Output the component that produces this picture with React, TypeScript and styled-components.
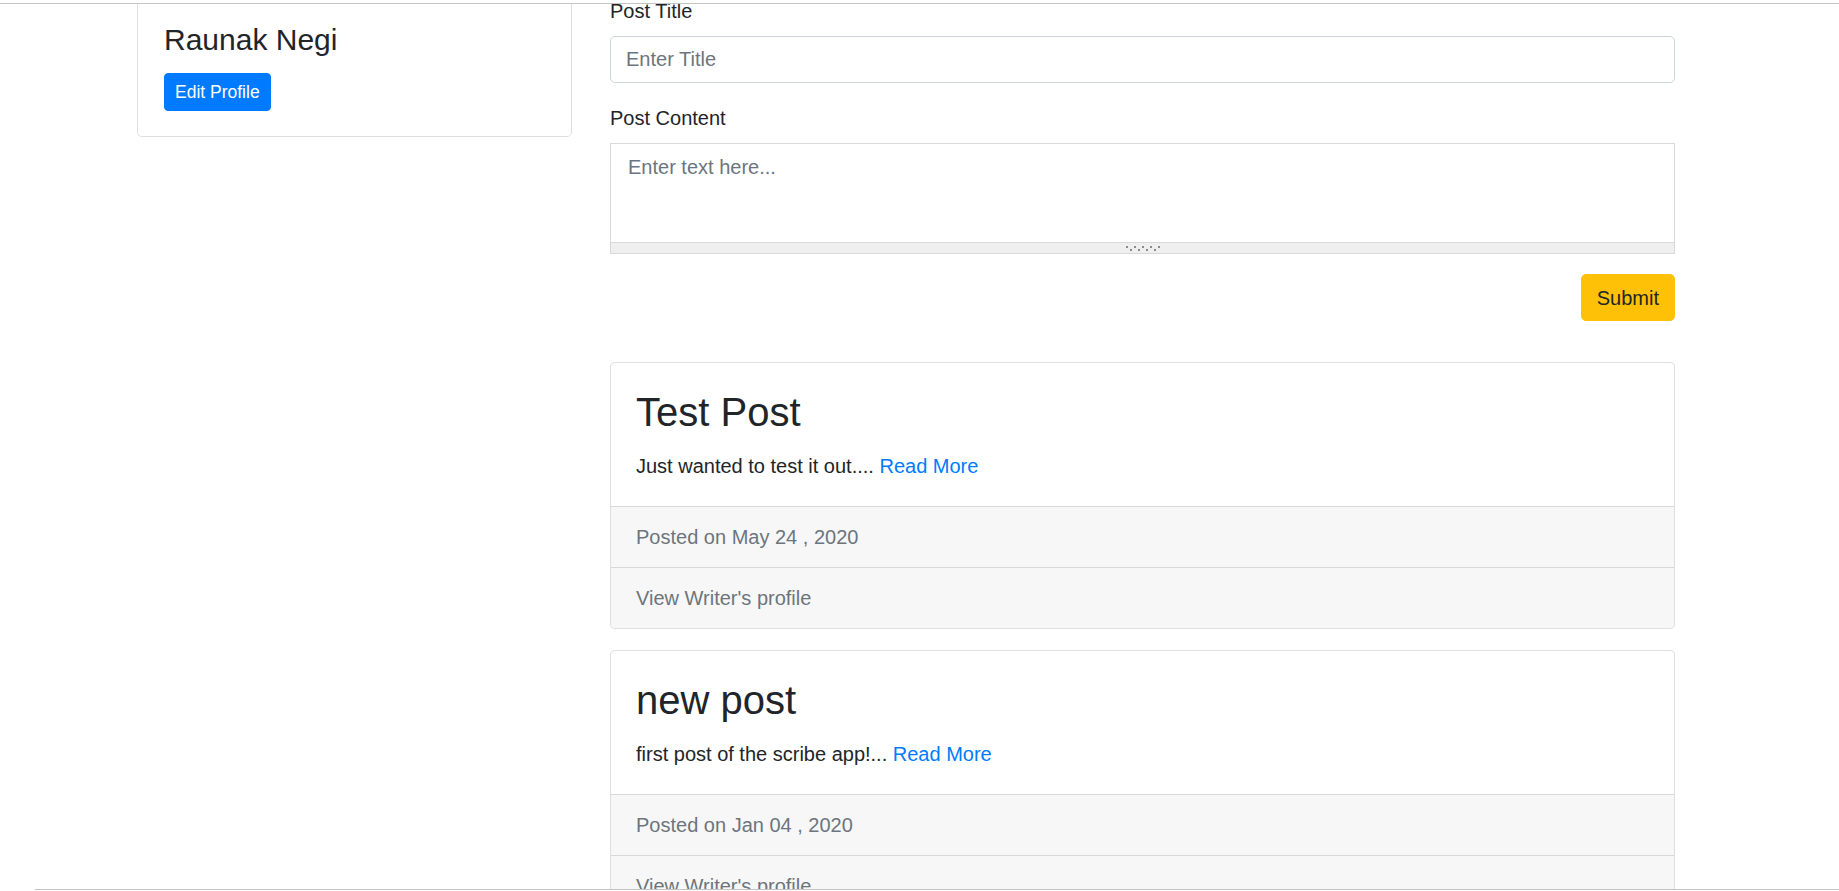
import React from "react";
import styled, { createGlobalStyle } from "styled-components";

const GlobalStyle = createGlobalStyle`
  html, body {
    margin: 0;
    padding: 0;
    background: #ffffff;
    overflow: hidden;
  }
  body {
    font-family: "Liberation Sans", Arial, sans-serif;
    color: #212529;
  }
  *, *::before, *::after {
    box-sizing: border-box;
  }
`;

const Frame = styled.div`
  width: 1839px;
  height: 891px;
  display: flex;
  flex-direction: column;
  background: #ffffff;
`;

const TopEdge = styled.div`
  flex: none;
  height: 4px;
  border-bottom: 1px solid #c4c4c4;
`;

const Viewport = styled.div`
  flex: 1;
  min-height: 0;
  overflow: hidden;
`;

const BottomEdge = styled.div`
  flex: none;
  height: 2px;
  margin-left: 35px;
  border-top: 1px solid #c4c4c4;
`;

const Row = styled.div`
  display: flex;
  align-items: flex-start;
  gap: 38px;
  padding-left: 137px;
  margin-top: -8px;
`;

const ProfileCard = styled.section`
  flex: none;
  width: 435px;
  padding: 25px 25px 25px 26px;
  border: 1px solid rgba(0, 0, 0, 0.125);
  border-radius: 5px;
  background: #ffffff;
`;

const Name = styled.h4`
  margin: 0 0 15px;
  font-size: 30px;
  line-height: 36px;
  font-weight: 400;
  color: #212529;
`;

const EditButton = styled.button`
  display: inline-block;
  padding: 5px 10px;
  font-family: inherit;
  font-size: 17.5px;
  line-height: 26px;
  color: #ffffff;
  background: #007bff;
  border: 1px solid #007bff;
  border-radius: 4px;
  cursor: pointer;
`;

const MainColumn = styled.main`
  flex: none;
  width: 1065px;
`;

const FieldGroup = styled.div`
  margin-bottom: 20px;
`;

const Label = styled.label`
  display: block;
  margin-bottom: 10px;
  font-size: 20px;
  line-height: 30px;
  color: #212529;
`;

const TextInput = styled.input`
  display: block;
  width: 100%;
  height: 47px;
  padding: 7.5px 15px;
  font-family: inherit;
  font-size: 20px;
  line-height: 30px;
  color: #495057;
  background: #ffffff;
  border: 1px solid #ced4da;
  border-radius: 5px;
  outline: none;
  &::placeholder {
    color: #6c757d;
  }
`;

const EditorBox = styled.div`
  display: flex;
  flex-direction: column;
  border: 1px solid #d9d9d9;
  background: #ffffff;
`;

const EditorArea = styled.textarea`
  display: block;
  width: 100%;
  height: 98px;
  padding: 11px 17px;
  font-family: inherit;
  font-size: 20px;
  line-height: 24px;
  color: #495057;
  border: none;
  outline: none;
  resize: none;
  &::placeholder {
    color: #6c757d;
  }
`;

const ResizeBar = styled.div`
  height: 11px;
  display: flex;
  align-items: center;
  justify-content: center;
  background: #efefef;
  border-top: 1px solid #d9d9d9;
`;

const SubmitRow = styled.div`
  display: flex;
  justify-content: flex-end;
`;

const SubmitButton = styled.button`
  padding: 7.5px 15px;
  font-family: inherit;
  font-size: 20px;
  line-height: 30px;
  color: #212529;
  background: #ffc107;
  border: 1px solid #ffc107;
  border-radius: 5px;
  cursor: pointer;
`;

const PostList = styled.div`
  margin-top: 41px;
`;

const PostCard = styled.article`
  margin-bottom: 21px;
  border: 1px solid rgba(0, 0, 0, 0.125);
  border-radius: 5px;
  overflow: hidden;
  background: #ffffff;
`;

const PostBody = styled.div`
  padding: 25px;
`;

const PostTitle = styled.h2`
  margin: 0 0 15px;
  font-size: 40px;
  line-height: 48px;
  font-weight: 400;
  color: #212529;
`;

const PostText = styled.p`
  margin: 0;
  font-size: 20px;
  line-height: 30px;
  color: #212529;
`;

const ReadMore = styled.a`
  color: #007bff;
  text-decoration: none;
`;

const PostFooter = styled.div`
  padding: 15px 25px;
  font-size: 20px;
  line-height: 30px;
  color: #6c757d;
  background: rgba(0, 0, 0, 0.03);
  border-top: 1px solid rgba(0, 0, 0, 0.125);
`;

const Grip = () => (
  <svg width="34" height="7" viewBox="0 0 34 7" aria-hidden="true">
    {Array.from({ length: 9 }).map((_, i) => (
      <rect
        key={i}
        x={i * 4}
        y={i % 2 === 0 ? 1 : 4}
        width="2"
        height="2"
        fill="#8a8a8a"
      />
    ))}
  </svg>
);

type Post = {
  title: string;
  excerpt: string;
  date: string;
};

const posts: Post[] = [
  { title: "Test Post", excerpt: "Just wanted to test it out....", date: "May 24 , 2020" },
  { title: "new post", excerpt: "first post of the scribe app!...", date: "Jan 04 , 2020" },
];

export default function App() {
  return (
    <>
      <GlobalStyle />
      <Frame>
        <TopEdge />
        <Viewport>
          <Row>
            <ProfileCard>
              <Name>Raunak Negi</Name>
              <EditButton type="button">Edit Profile</EditButton>
            </ProfileCard>
            <MainColumn>
              <form onSubmit={(e) => e.preventDefault()}>
                <FieldGroup>
                  <Label htmlFor="post-title">Post Title</Label>
                  <TextInput id="post-title" type="text" placeholder="Enter Title" />
                </FieldGroup>
                <FieldGroup>
                  <Label htmlFor="post-content">Post Content</Label>
                  <EditorBox>
                    <EditorArea id="post-content" placeholder="Enter text here..." />
                    <ResizeBar>
                      <Grip />
                    </ResizeBar>
                  </EditorBox>
                </FieldGroup>
                <SubmitRow>
                  <SubmitButton type="submit">Submit</SubmitButton>
                </SubmitRow>
              </form>
              <PostList>
                {posts.map((p) => (
                  <PostCard key={p.title}>
                    <PostBody>
                      <PostTitle>{p.title}</PostTitle>
                      <PostText>
                        {p.excerpt} <ReadMore href="#">Read More</ReadMore>
                      </PostText>
                    </PostBody>
                    <PostFooter>Posted on {p.date}</PostFooter>
                    <PostFooter>View Writer's profile</PostFooter>
                  </PostCard>
                ))}
              </PostList>
            </MainColumn>
          </Row>
        </Viewport>
        <BottomEdge />
      </Frame>
    </>
  );
}
